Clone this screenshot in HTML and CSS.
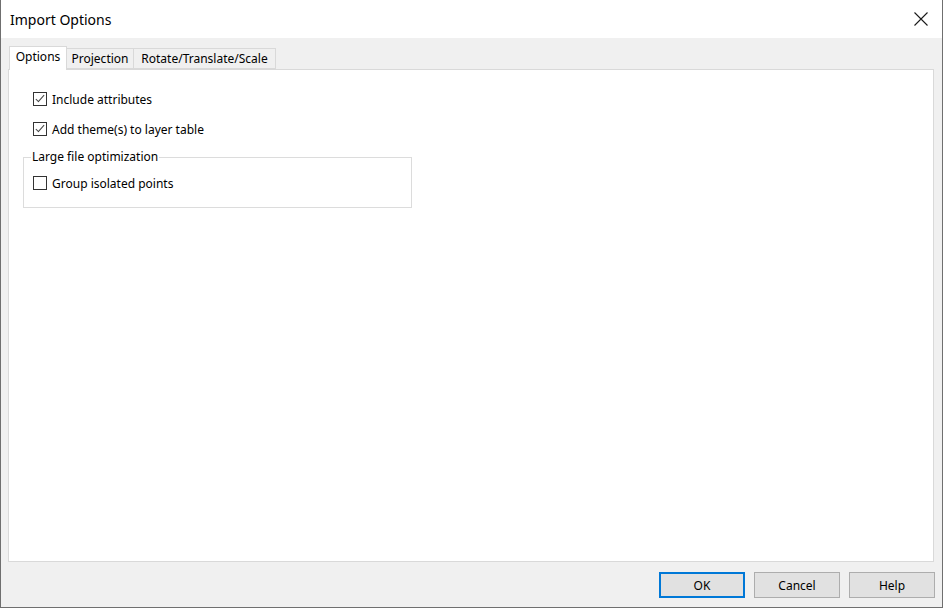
FILE: index.html
```html
<!DOCTYPE html>
<html lang="en">
<head>
    <meta charset="UTF-8">
    <title>Import Options</title>
    <link rel="stylesheet" href="styles.css">
</head>
<body>

    <div class="janela">
        <div class="barra-titulo">
            <span class="titulo">Import Options</span>
            <span class="fechar">
                <svg width="14" height="14" viewBox="0 0 14 14">
                    <path d="M0.5 0.5 L13.5 13.5 M13.5 0.5 L0.5 13.5" stroke="#1a1a1a" stroke-width="1.1" fill="none"/>
                </svg>
            </span>
        </div>

        <div class="conteudo">
            <div class="abas">
                <div class="aba ativa aba-opcoes">Options</div>
                <div class="aba aba-projecao">Projection</div>
                <div class="aba aba-rotacao">Rotate/Translate/Scale</div>
            </div>

            <div class="painel">
                <label class="linha-check">
                    <span class="caixa marcada"></span>
                    Include attributes
                </label>
                <label class="linha-check">
                    <span class="caixa marcada"></span>
                    Add theme(s) to layer table
                </label>

                <fieldset class="grupo">
                    <legend>Large file optimization</legend>
                    <label class="linha-check">
                        <span class="caixa"></span>
                        Group isolated points
                    </label>
                </fieldset>
            </div>

            <div class="botoes">
                <button class="botao padrao">OK</button>
                <button class="botao">Cancel</button>
                <button class="botao">Help</button>
            </div>
        </div>
    </div>

</body>
</html>
```

FILE: styles.css
```css
body {
    margin: 0;
    padding: 0;
    font-family: "Segoe UI", "Noto Sans", Arial, sans-serif;
    font-size: 12px;
    color: #000;
    background-color: #f0f0f0;
}

.janela {
    width: 943px;
    height: 608px;
    box-sizing: border-box;
    border: 1px solid #6f6f6f;
    border-top: none;
    display: flex;
    flex-direction: column;
    background-color: #f0f0f0;
}

.barra-titulo {
    height: 38px;
    background-color: #fff;
    display: flex;
    align-items: center;
    justify-content: space-between;
    padding: 0 14px 0 9px;
}

.titulo {
    font-size: 14px;
    color: #000;
}

.fechar {
    display: flex;
    margin-top: -1px;
}

.conteudo {
    flex: 1;
    display: flex;
    flex-direction: column;
    padding: 8px 8px 0 7px;
}

/* Abas */
.abas {
    display: flex;
    align-items: flex-end;
    height: 23px;
    padding-left: 1px;
}

.aba {
    box-sizing: border-box;
    height: 21px;
    border: 1px solid #d9d9d9;
    border-left: none;
    background-color: #f0f0f0;
    display: flex;
    align-items: center;
    justify-content: center;
    padding-bottom: 1px;
}

.aba.ativa {
    height: 24px;
    margin-bottom: -1px;
    border-left: 1px solid #d9d9d9;
    border-bottom: none;
    background-color: #fff;
    position: relative;
    z-index: 1;
    padding-bottom: 4px;
}

.aba-opcoes { width: 58px; }
.aba-projecao { width: 67px; }
.aba-rotacao { width: 142px; }

.painel {
    height: 493px;
    box-sizing: border-box;
    border: 1px solid #d9d9d9;
    background-color: #fff;
    padding: 21px 0 0 24px;
}

/* Checkboxes */
.linha-check {
    display: flex;
    align-items: center;
    height: 16px;
    margin-bottom: 14px;
}

.caixa {
    box-sizing: border-box;
    flex-shrink: 0;
    width: 14px;
    height: 14px;
    border: 1px solid #333;
    background-color: #fff;
    margin-right: 5px;
    display: inline-block;
    position: relative;
}

.caixa.marcada::after {
    content: "";
    position: absolute;
    left: 4px;
    top: 0px;
    width: 3px;
    height: 8px;
    border-right: 1px solid #444;
    border-bottom: 1px solid #444;
    transform: rotate(42deg);
}

.grupo {
    width: 389px;
    box-sizing: border-box;
    height: 58px;
    margin: -1px 0 0 -10px;
    padding: 11px 0 0 9px;
    border: 1px solid #dcdcdc;
}

.grupo legend {
    padding: 0 1px;
    margin-left: -2px;
    line-height: 14px;
}

.grupo .linha-check {
    margin-top: 0;
}

/* Botões */
.botoes {
    display: flex;
    justify-content: flex-end;
    gap: 9px;
    padding-top: 10px;
    margin-right: -1px;
}

.botao {
    width: 86px;
    height: 26px;
    box-sizing: border-box;
    font-family: "Segoe UI", "Noto Sans", Arial, sans-serif;
    font-size: 12px;
    background-color: #e1e1e1;
    border: 1px solid #adadad;
    color: #000;
    padding: 0;
}

.botao.padrao {
    border: 2px solid #0078d7;
}
```
